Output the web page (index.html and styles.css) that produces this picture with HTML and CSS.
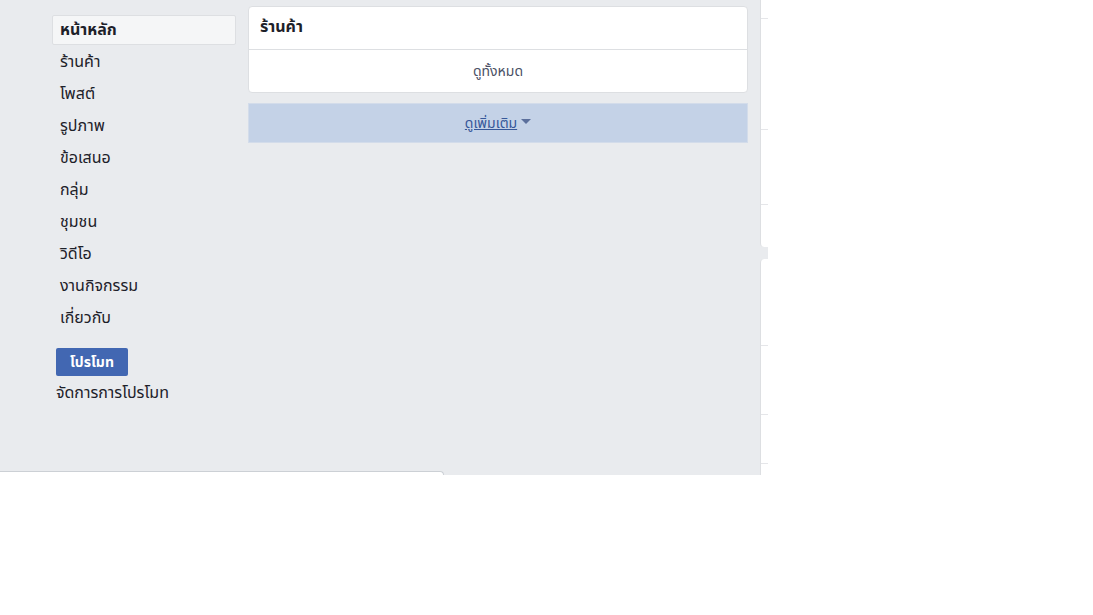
FILE: index.html
```html
<!DOCTYPE html>
<html lang="th">
<head>
    <meta charset="UTF-8">
    <meta name="viewport" content="width=device-width, initial-scale=1.0">
    <title>หน้าหลัก</title>
    <link rel="stylesheet" href="styles.css">
</head>
<body>
    <div class="page">
        <div class="main">
            <div class="columns">
                <!-- Page navigation -->
                <div class="nav">
                    <a class="nav-item active">หน้าหลัก</a>
                    <a class="nav-item">ร้านค้า</a>
                    <a class="nav-item">โพสต์</a>
                    <a class="nav-item">รูปภาพ</a>
                    <a class="nav-item">ข้อเสนอ</a>
                    <a class="nav-item">กลุ่ม</a>
                    <a class="nav-item">ชุมชน</a>
                    <a class="nav-item">วิดีโอ</a>
                    <a class="nav-item">งานกิจกรรม</a>
                    <a class="nav-item">เกี่ยวกับ</a>

                    <button class="promote-btn">โปรโมท</button>
                    <a class="manage-link">จัดการการโปรโมท</a>
                </div>

                <!-- Shop card -->
                <div class="content">
                    <div class="card">
                        <div class="card-header">ร้านค้า</div>
                        <div class="card-footer">ดูทั้งหมด</div>
                    </div>
                    <div class="see-more">
                        <a class="see-more-link">ดูเพิ่มเติม</a>
                        <span class="caret"></span>
                    </div>
                </div>
            </div>
            <div class="bottom-card"></div>
        </div>

        <div class="side">
            <div class="side-card first">
                <div class="tick" style="margin-top: 18px"></div>
                <div class="tick" style="margin-top: 110px"></div>
                <div class="tick" style="margin-top: 74px"></div>
            </div>
            <div class="side-card second">
                <div class="tick" style="margin-top: 86px"></div>
                <div class="tick" style="margin-top: 68px"></div>
                <div class="tick" style="margin-top: 48px"></div>
            </div>
        </div>
    </div>
</body>
</html>
```

FILE: styles.css
```css
:root {
    --bg-gray: #e9ebee;
    --border: #dddfe2;
    --text-dark: #1d2129;
    --link: #365899;
    --fb-blue: #4267b2;
}

body {
    margin: 0;
    background: #ffffff;
    font-family: Tahoma, "Noto Sans Thai", "Liberation Sans", "DejaVu Sans", sans-serif;
    color: var(--text-dark);
}

.page {
    display: flex;
    align-items: flex-start;
}

.main {
    width: 760px;
    height: 475px;
    background: var(--bg-gray);
    display: flex;
    flex-direction: column;
}

.columns {
    display: flex;
    gap: 12px;
    padding-left: 52px;
}

/* Left navigation */
.nav {
    width: 184px;
    padding-top: 15px;
    display: flex;
    flex-direction: column;
    gap: 2px;
}

.nav-item {
    display: flex;
    align-items: center;
    height: 30px;
    padding-left: 7px;
    font-size: 16px;
    border: 1px solid transparent;
    border-radius: 2px;
    box-sizing: border-box;
    cursor: pointer;
}

.nav-item.active {
    background: #f5f6f7;
    border-color: var(--border);
    font-weight: bold;
}

.promote-btn {
    align-self: flex-start;
    margin: 13px 0 0 4px;
    width: 72px;
    height: 28px;
    background: var(--fb-blue);
    border: none;
    border-radius: 2px;
    color: #ffffff;
    font-family: inherit;
    font-size: 14px;
    font-weight: bold;
    padding: 0;
}

.manage-link {
    margin: 2px 0 0 4px;
    font-size: 16px;
    line-height: 26px;
}

/* Middle column */
.content {
    width: 500px;
    padding-top: 6px;
    display: flex;
    flex-direction: column;
    gap: 10px;
}

.card {
    background: #ffffff;
    border: 1px solid var(--border);
    border-radius: 4px;
}

.card-header {
    height: 43px;
    padding: 0 0 3px 11px;
    box-sizing: border-box;
    display: flex;
    align-items: center;
    font-size: 16px;
    font-weight: bold;
    border-bottom: 1px solid var(--border);
}

.card-footer {
    height: 42px;
    display: flex;
    align-items: center;
    justify-content: center;
    font-size: 14px;
    color: #4b5166;
}

.see-more {
    height: 38px;
    background: #c4d2e7;
    border: 1px solid #d3dcea;
    display: flex;
    align-items: center;
    justify-content: center;
    gap: 4px;
}

.see-more-link {
    font-size: 14px;
    color: var(--link);
    text-decoration: underline;
}

.caret {
    width: 0;
    height: 0;
    border-left: 5px solid transparent;
    border-right: 5px solid transparent;
    border-top: 5px solid #5b6f9c;
    margin-bottom: 3px;
}

.bottom-card {
    margin-top: auto;
    margin-left: -1px;
    width: 443px;
    height: 3px;
    background: #ffffff;
    border: 1px solid #ccd0d5;
    border-bottom: none;
    border-radius: 0 4px 0 0;
}

/* Right column, clipped */
.side {
    width: 8px;
    background: var(--bg-gray);
    display: flex;
    flex-direction: column;
    gap: 12px;
}

.side-card {
    background: #ffffff;
    border-left: 1px solid var(--border);
    display: flex;
    flex-direction: column;
}

.side-card.first {
    height: 247px;
    border-bottom-left-radius: 4px;
}

.side-card.second {
    height: 216px;
    border-top-left-radius: 4px;
}

.tick {
    height: 1px;
    background: #e5e6e9;
}
```
